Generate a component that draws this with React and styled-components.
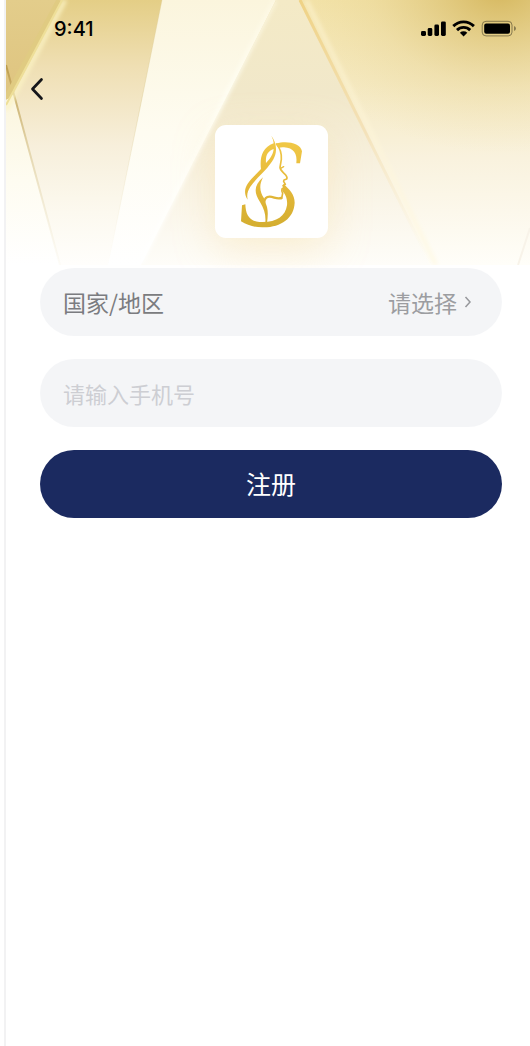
import React, { useState } from "react";
import styled, { createGlobalStyle } from "styled-components";

function App() {
  return (
    <>
      <GlobalStyle />
      <Screen>
        <Hero />
        <StatusBar />
        <NavBar>
          <BackButton type="button" aria-label="返回">
            <svg width="14" height="24" viewBox="0 0 14 24">
              <path
                d="M11.5 2.5 2.5 12l9 9.5"
                fill="none"
                stroke="#15161a"
                strokeWidth="2.7"
                strokeLinecap="round"
                strokeLinejoin="round"
              />
            </svg>
          </BackButton>
        </NavBar>
        <LogoRow>
          <LogoCard>
            <Logo />
          </LogoCard>
        </LogoRow>
        <RegisterForm />
      </Screen>
    </>
  );
}

function Hero() {
  return (
    <HeroArt viewBox="0 0 524 265" preserveAspectRatio="none" aria-hidden="true">
      <defs>
        <linearGradient id="base" x1="0" y1="0" x2="0" y2="1">
          <stop offset="0" stopColor="#e4ce86" />
          <stop offset="0.25" stopColor="#efdfb3" />
          <stop offset="0.55" stopColor="#f7efdb" />
          <stop offset="0.8" stopColor="#fcf9ef" />
          <stop offset="1" stopColor="#fffefc" />
        </linearGradient>
        <linearGradient id="beam" x1="0" y1="0" x2="0" y2="1">
          <stop offset="0" stopColor="#fbf5dd" />
          <stop offset="0.5" stopColor="#fefcf1" />
          <stop offset="1" stopColor="#ffffff" />
        </linearGradient>
        <linearGradient id="middle" x1="0" y1="0" x2="0" y2="1">
          <stop offset="0" stopColor="#f4eac6" />
          <stop offset="0.35" stopColor="#f1e8ca" />
          <stop offset="0.6" stopColor="#f7f0dd" />
          <stop offset="1" stopColor="#fefdf9" />
        </linearGradient>
        <linearGradient id="right" x1="0" y1="0" x2="0" y2="1">
          <stop offset="0" stopColor="#f3e3a9" />
          <stop offset="0.3" stopColor="#f5e9c0" />
          <stop offset="0.6" stopColor="#f9f2de" />
          <stop offset="1" stopColor="#fffef9" />
        </linearGradient>
        <linearGradient id="corner" x1="0" y1="0" x2="0" y2="1">
          <stop offset="0" stopColor="#e3cd8b" />
          <stop offset="1" stopColor="#dec37e" />
        </linearGradient>
        <linearGradient id="goldLine" x1="0" y1="0" x2="0" y2="1">
          <stop offset="0" stopColor="#efd285" />
          <stop offset="0.5" stopColor="#f4e3bb" />
          <stop offset="1" stopColor="#fbf5e6" stopOpacity="0" />
        </linearGradient>
        <linearGradient id="darkLine" x1="0" y1="0" x2="0" y2="1">
          <stop offset="0" stopColor="#bd9d4d" />
          <stop offset="0.4" stopColor="#e2d3a8" />
          <stop offset="1" stopColor="#f5f0e0" stopOpacity="0.2" />
        </linearGradient>
        <linearGradient id="whiteLine" x1="0" y1="0" x2="0" y2="1">
          <stop offset="0" stopColor="#fffbe8" stopOpacity="0.7" />
          <stop offset="0.4" stopColor="#fffff6" />
          <stop offset="1" stopColor="#ffffff" />
        </linearGradient>
        <linearGradient id="beamEdge" x1="0" y1="0" x2="0" y2="1">
          <stop offset="0" stopColor="#d8c68c" stopOpacity="0.3" />
          <stop offset="0.4" stopColor="#d8c68c" stopOpacity="0.4" />
          <stop offset="1" stopColor="#e8dcb8" stopOpacity="0" />
        </linearGradient>
        <radialGradient
          id="glowDark"
          gradientUnits="userSpaceOnUse"
          cx="0"
          cy="0"
          r="1"
          gradientTransform="translate(494 -12) scale(215 165)"
        >
          <stop offset="0" stopColor="#d3b458" stopOpacity="0.95" />
          <stop offset="0.25" stopColor="#d8bc68" stopOpacity="0.65" />
          <stop offset="0.6" stopColor="#e0c880" stopOpacity="0.25" />
          <stop offset="1" stopColor="#ead79a" stopOpacity="0" />
        </radialGradient>
        <filter id="soft" x="-20%" y="-20%" width="140%" height="140%">
          <feGaussianBlur stdDeviation="2" />
        </filter>
      </defs>
      <rect width="524" height="265" fill="url(#base)" />
      <path d="M0 0H57L0 108Z" fill="url(#corner)" />
      <path d="M0 100 8 94 54 265H0Z" fill="url(#beam)" />
      <path d="M156 0H270L135 265H102Z" fill="url(#beam)" />
      <path d="M270 0H293L424 265H135Z" fill="url(#middle)" />
      <path d="M293 0H524V265H424Z" fill="url(#right)" />
      <path d="M293 0H524V265H424Z" fill="url(#glowDark)" />
      <path d="M269 0 135 262" stroke="url(#whiteLine)" strokeWidth="4" filter="url(#soft)" />
      <path d="M156 0 102 265" stroke="url(#beamEdge)" />
      <path d="M300 0 430 265" stroke="#fff6d8" strokeOpacity="0.6" strokeWidth="4" filter="url(#soft)" />
      <path d="M294 0 425 265" stroke="url(#goldLine)" strokeWidth="3" />
      <path d="M0 65 54 265" stroke="url(#darkLine)" strokeWidth="2" />
      <path d="M59 0 0 110" stroke="#fbf3c4" strokeWidth="4" filter="url(#soft)" />
      <path d="M53 0 0 98" stroke="#e0cb82" strokeWidth="5" />
      <path d="M56 0 0 105" stroke="#eedf98" strokeWidth="2" />
      <path d="M524 228 512 265" stroke="#f8f3e9" strokeWidth="2" />
    </HeroArt>
  );
}

function StatusBar() {
  return (
    <StatusRow>
      <Time>9:41</Time>
      <StatusIcons viewBox="0 0 96 18" aria-hidden="true">
        <rect x="0" y="11" width="5" height="5" rx="1.4" />
        <rect x="6.7" y="8" width="4.6" height="8" rx="1.4" />
        <rect x="13.4" y="4.5" width="4.6" height="11.5" rx="1.4" />
        <rect x="20" y="1.4" width="4.8" height="14.6" rx="1.4" />
        <g fill="none" stroke="#000" strokeWidth="2.9">
          <path d="M32.3 6.1a14.6 14.6 0 0 1 20.6 0" />
          <path d="M36 10.1a9.4 9.4 0 0 1 13.2 0" />
        </g>
        <path d="M38.9 12.8a5.4 5.4 0 0 1 7.4 0L42.6 16.5Z" />
        <rect
          x="61.2"
          y="1.3"
          width="29.8"
          height="14.6"
          rx="3.8"
          fill="none"
          stroke="#000"
          strokeOpacity="0.4"
          strokeWidth="1"
        />
        <rect x="63.2" y="3.4" width="25.8" height="10.4" rx="2" />
        <path d="M93 6v5q2-.6 2-2.5T93 6Z" fillOpacity="0.4" />
      </StatusIcons>
    </StatusRow>
  );
}

function Logo() {
  return (
    <svg width="100%" height="100%" viewBox="27 20 339 339" role="img" aria-label="S">
      <defs>
        <linearGradient id="gold" gradientUnits="userSpaceOnUse" x1="0" y1="55" x2="0" y2="327">
          <stop offset="0" stopColor="#f2ca48" />
          <stop offset="0.5" stopColor="#e6b93a" />
          <stop offset="1" stopColor="#d4ae30" />
        </linearGradient>
      </defs>
      <g fill="url(#gold)">
        {/* top arm of the S */}
        <path d="M211 75C240 67 284 72 288 99L282 135H271C275 106 262 88 234 87Q224 86 217 90Z" />
        {/* loop and long strand of hair */}
        <path
          fillRule="evenodd"
          d="M196 52C205 64 211 80 210 96C209 117 198 131 184 148C168 167 147 184 133 205C124 219 122 231 125 244C114 229 115 211 125 196C136 179 153 166 165 152C161 121 167 88 203 75Q203 66 196 52ZM203 92C185 98 178 112 180 134C191 122 201 110 203 92Z"
        />
        {/* lock behind the neck */}
        <path d="M171 177C158 202 162 222 174 240L183 266C187 282 185 298 183 315L178 313C180 290 175 272 162 251C142 221 145 200 171 177Z" />
        {/* lower bowl */}
        <path d="M232 197C252 214 266 229 266 253C264 300 225 326 174 327C146 328 125 321 105 309L108 261L118 258C119 287 128 308 160 311C208 314 238 296 243 261C245 240 238 228 229 218Z" />
      </g>
      <g fill="none" stroke="url(#gold)" strokeLinecap="round" strokeLinejoin="round">
        {/* profile */}
        <path
          strokeWidth="5"
          d="M211 77C222 89 227 105 226 123L222 147C222 157 232 162 239 170Q245 178 242 182L234 185Q231 188 235 193L238 198L231 202L235 207L228 212Q226 219 230 225L227 240"
        />
        <path strokeWidth="4" d="M224 150 233 145" />
        <path strokeWidth="7" d="M226 239C211 243 204 235 191 235Q176 235 174 254" />
      </g>
    </svg>
  );
}

function RegisterForm() {
  const [country, setCountry] = useState("");
  const [phone, setPhone] = useState("");

  return (
    <Form onSubmit={(e) => e.preventDefault()}>
      <Field>
        <FieldLabel htmlFor="country">国家/地区</FieldLabel>
        <CountrySelect
          id="country"
          value={country}
          onChange={(e) => setCountry(e.target.value)}
        >
          <option value="">请选择</option>
        </CountrySelect>
        <svg width="8" height="14" viewBox="0 0 8 14" aria-hidden="true">
          <path d="M1.5 2 6 7l-4.5 5" fill="none" stroke="#97989c" strokeWidth="1.5" />
        </svg>
      </Field>
      <Field>
        <PhoneInput
          type="tel"
          aria-label="手机号"
          placeholder="请输入手机号"
          value={phone}
          onChange={(e) => setPhone(e.target.value)}
        />
      </Field>
      <SubmitButton type="submit">注册</SubmitButton>
    </Form>
  );
}

export default App;

const GlobalStyle = createGlobalStyle`
  * {
    box-sizing: border-box;
  }
  body {
    margin: 0;
    padding-left: 4px;
    background-color: #fff;
    font-family: "Noto Sans CJK SC", sans-serif;
  }
  button, input, select {
    font-family: inherit;
  }
`;

const Screen = styled.main`
  position: relative;
  isolation: isolate;
  min-height: 100vh;
  border-left: 2px solid #f2f2f3;
`;

/* sits behind the status bar and the logo */
const HeroArt = styled.svg`
  position: absolute;
  z-index: -1;
  top: 0;
  left: 0;
  width: 100%;
  height: 265px;
`;

const StatusRow = styled.div`
  display: flex;
  align-items: center;
  justify-content: space-between;
  height: 58px;
  padding: 0 13px 0 48px;
`;

const Time = styled.span`
  color: #000;
  font-family: Inter, sans-serif;
  font-size: 20px;
  font-weight: 500;
`;

const StatusIcons = styled.svg`
  width: 96px;
  height: 18px;
`;

const NavBar = styled.nav`
  display: flex;
  align-items: center;
  height: 62px;
  padding-left: 24px;
`;

const BackButton = styled.button`
  display: flex;
  padding: 0;
  border: none;
  background: none;
`;

const LogoRow = styled.div`
  display: flex;
  justify-content: center;
  padding: 5px 28px 30px 34px;
`;

const LogoCard = styled.div`
  width: 113px;
  height: 113px;
  border-radius: 11px;
  background-color: #fff;
  box-shadow: 0 12px 40px rgba(246, 214, 145, 0.35);
`;

const Form = styled.form`
  display: flex;
  flex-direction: column;
  gap: 23px;
  padding: 0 28px 0 34px;
`;

const Field = styled.div`
  display: flex;
  align-items: center;
  height: 68px;
  padding: 0 30px 0 23px;
  border-radius: 34px;
  background-color: rgba(242, 244, 246, 0.88);
`;

const FieldLabel = styled.label`
  color: #7b7c80;
  font-size: 23px;
`;

const CountrySelect = styled.select`
  flex: 1;
  min-width: 0;
  padding: 0 7px 0 0;
  border: none;
  appearance: none;
  background: none;
  color: #9c9da1;
  font-size: 23px;
  text-align-last: right;
`;

const PhoneInput = styled.input`
  flex: 1;
  min-width: 0;
  padding: 0;
  border: none;
  outline: none;
  background: none;
  color: #33343a;
  font-size: 22px;

  &::placeholder {
    color: #cdced3;
  }
`;

const SubmitButton = styled.button`
  height: 68px;
  padding: 0 0 2px;
  border: none;
  border-radius: 34px;
  background-color: #1b2a60;
  color: #fff;
  font-size: 25px;
  font-weight: 400;
`;
